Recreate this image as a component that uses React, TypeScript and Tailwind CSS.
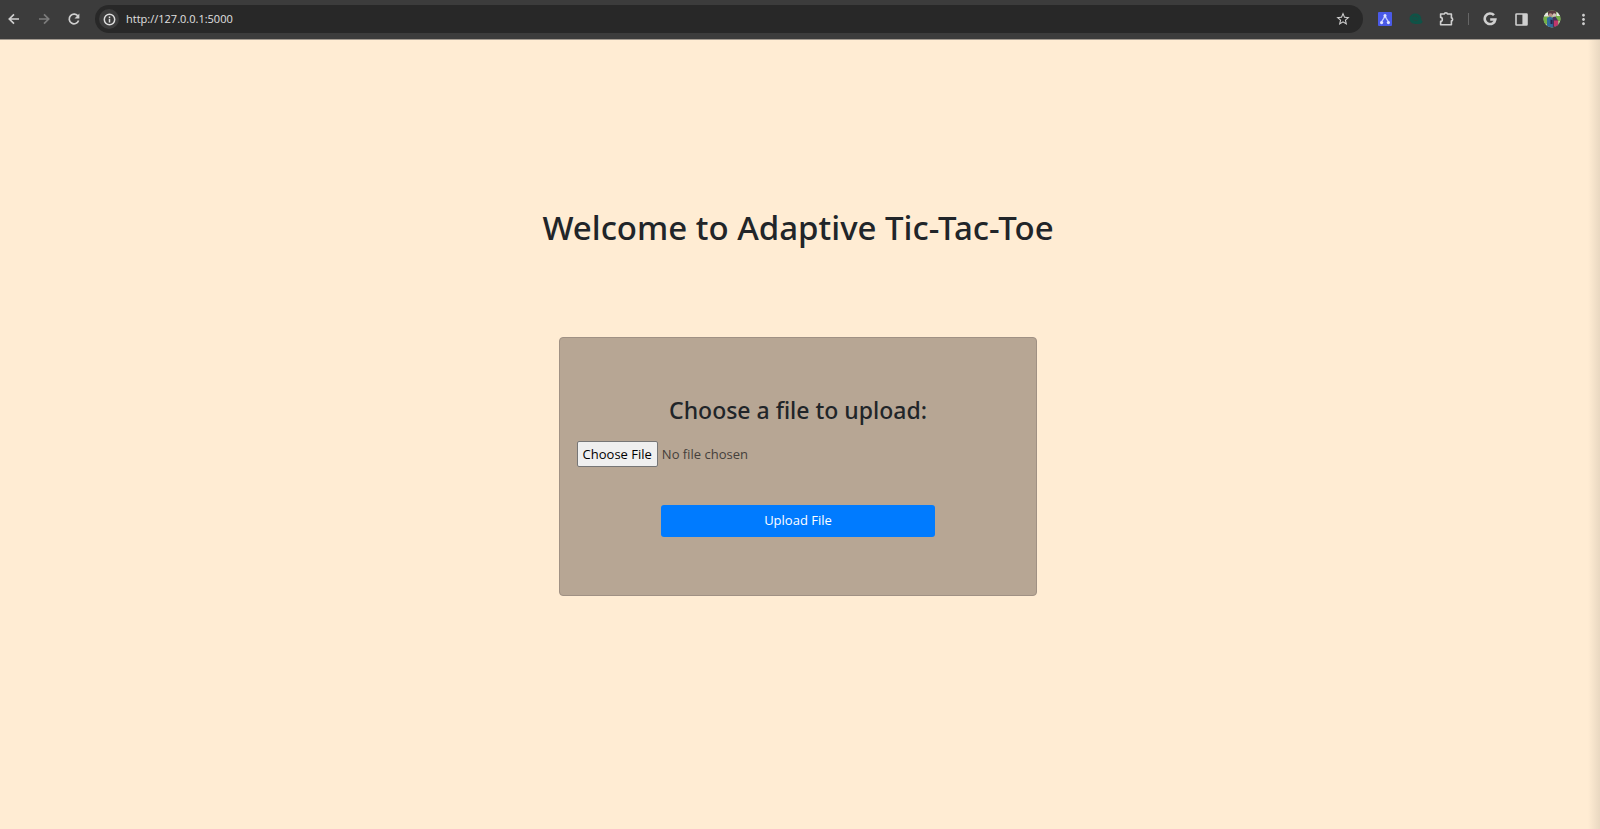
import type { ReactNode } from "react";
import { MdMoreVert, MdStarBorder } from "react-icons/md";

function ToolbarButton({ label, dim, children }: { label: string; dim?: boolean; children: ReactNode }) {
  return (
    <button
      type="button"
      aria-label={label}
      className={`flex size-5 shrink-0 items-center justify-center ${dim ? "text-[#7c7c7c]" : "text-[#cfcfcf]"}`}
    >
      {children}
    </button>
  );
}

function ArrowIcon({ forward }: { forward?: boolean }) {
  return (
    <svg width="12" height="12" viewBox="0 0 12 12" fill="none" stroke="currentColor" strokeWidth="1.7">
      <path d={forward ? "M1 6h9.4M6 1.3L10.7 6 6 10.7" : "M11 6H1.6M6 1.3L1.3 6 6 10.7"} />
    </svg>
  );
}

function ReloadIcon() {
  return (
    <svg width="14" height="14" viewBox="0 0 14 14">
      <path d="M11.1 4.4A4.8 4.8 0 1 0 11.6 8.5" fill="none" stroke="currentColor" strokeWidth="1.7" />
      <path d="M12.4 1.4v5H7.5z" fill="currentColor" />
    </svg>
  );
}

function InfoIcon() {
  return (
    <svg width="13" height="13" viewBox="0 0 13 13" fill="none" stroke="currentColor" strokeWidth="1.5">
      <circle cx="6.5" cy="6.5" r="5.2" />
      <path d="M6.5 5.8v3.6M6.5 3.4v1.5" />
    </svg>
  );
}

function NetworkIcon() {
  return (
    <svg width="14" height="14" viewBox="0 0 14 14">
      <rect width="14" height="14" rx="1" fill="#4a5ae8" />
      <path d="M7 3.5L5.6 6.6 3.4 10M7 3.5l1.4 3.1L10.6 10" stroke="#c9d0fb" strokeWidth="1.3" fill="none" />
      <circle cx="7" cy="3.4" r="1.5" fill="#dfe4ff" />
      <circle cx="3.6" cy="10.6" r="1.6" fill="#dfe4ff" />
      <circle cx="10.4" cy="10.6" r="1.6" fill="#dfe4ff" />
    </svg>
  );
}

function GreenIcon() {
  return (
    <svg width="14" height="14" viewBox="0 0 14 14">
      <path d="M.6 6.8C.6 3.6 3.2 1.6 6.4 1.6S12 3.6 12.2 6.6c.1 1.4.5 2.4 1.5 3.2-.8 1.6-2.2 2.2-4 2.2H6.4C3.2 12 .6 10 .6 6.8z" fill="#0f5347" />
      <path d="M3.4 4.8c1.8-1.2 4.4-.8 5.8 1M3.6 7c1.4 1.8 3.6 2.2 5.4 1.2" stroke="#27463f" strokeWidth="1" fill="none" />
    </svg>
  );
}

function PuzzleIcon() {
  return (
    <svg width="16" height="16" viewBox="0 0 16 16" fill="none" stroke="#cfcfcf" strokeWidth="1.6" strokeLinejoin="round">
      <path d="M1.6 3h3.8a1.5 1.2 0 0 1 3 0H12.4v3.9a1.2 1.5 0 0 1 0 3V13.8H1.6v-3.4a1.7 2 0 0 0 0-4z" />
    </svg>
  );
}

function GoogleIcon() {
  return (
    <svg width="14" height="14" viewBox="0 0 14 14" fill="none" stroke="#cfcfcf" strokeWidth="2.6">
      <path d="M11 3.2A5.3 5.3 0 1 0 12.3 7.5H7.2" />
    </svg>
  );
}

function SidePanelIcon() {
  return (
    <svg width="13" height="13" viewBox="0 0 13 13">
      <rect x="1" y="1" width="11" height="11" rx="0.5" fill="none" stroke="#cfcfcf" strokeWidth="1.6" />
      <path d="M7.4 1H12v11H7.4z" fill="#cfcfcf" />
    </svg>
  );
}

function Avatar() {
  return (
    <svg width="18" height="18" viewBox="0 0 18 18">
      <clipPath id="avatar-clip">
        <circle cx="9" cy="9" r="8.5" />
      </clipPath>
      <g clipPath="url(#avatar-clip)">
        <path d="M0 0h18v18H0z" fill="#a9c98c" />
        <path d="M0 7h6v7H0zM13 6h5v5h-5z" fill="#74b048" />
        <path d="M1 3h4v3H1zM14 2h3v4h-3z" fill="#e6e5e3" />
        <path d="M5 0h8v5H5z" fill="#5a3c40" />
        <circle cx="7.4" cy="5.2" r="2" fill="#b98f82" />
        <circle cx="11.3" cy="5" r="1.8" fill="#d5c0bb" />
        <path d="M4 8l3-1.5 3 1.5v10H4z" fill="#2f6b9c" />
        <path d="M9.5 7.2l3-.6 2.5 4V18h-5z" fill="#493459" />
        <path d="M11 10.5h4.2v6H11z" fill="#c0376b" />
        <path d="M7.5 9.5l2 .5v4h-2z" fill="#26234a" />
      </g>
    </svg>
  );
}

function BrowserBar() {
  return (
    <header className="flex h-10 shrink-0 items-center border-b border-[#a39a90] bg-[#3c3c3c] pr-[7px] pb-px pl-1">
      <nav aria-label="Navigation" className="flex items-center gap-2.5">
        <ToolbarButton label="Back"><ArrowIcon /></ToolbarButton>
        <ToolbarButton label="Forward" dim><ArrowIcon forward /></ToolbarButton>
        <ToolbarButton label="Reload"><ReloadIcon /></ToolbarButton>
      </nav>
      <div className="ml-[11px] flex h-7 grow items-center rounded-full bg-[#282828] pr-2.5 pl-1">
        <button type="button" aria-label="Site information" className="flex size-5 items-center justify-center rounded-full bg-[#3c3c3c] text-[#dcdcdc]">
          <InfoIcon />
        </button>
        <input
          aria-label="Address"
          defaultValue="http://127.0.0.1:5000"
          className="ml-[7px] min-w-0 grow bg-transparent font-['Open_Sans',sans-serif] text-[11px] text-[#e0e0e0] outline-none"
        />
        <ToolbarButton label="Bookmark"><MdStarBorder size={16} /></ToolbarButton>
      </div>
      <div className="ml-3 flex items-center gap-[11px]">
        <ToolbarButton label="Network extension"><NetworkIcon /></ToolbarButton>
        <ToolbarButton label="Green extension"><GreenIcon /></ToolbarButton>
        <ToolbarButton label="Extensions"><PuzzleIcon /></ToolbarButton>
      </div>
      <div className="mx-[11px] h-3 w-px bg-[#666666]" />
      <div className="flex items-center gap-[11px]">
        <ToolbarButton label="Google"><GoogleIcon /></ToolbarButton>
        <ToolbarButton label="Side panel"><SidePanelIcon /></ToolbarButton>
        <ToolbarButton label="Profile"><Avatar /></ToolbarButton>
        <ToolbarButton label="Menu"><MdMoreVert size={17} /></ToolbarButton>
      </div>
    </header>
  );
}

export default function App() {
  return (
    <div className="flex min-h-screen flex-col bg-[#ffecd3] font-['Open_Sans',sans-serif] text-[#212529]">
      <BrowserBar />
      <main className="relative flex grow flex-col items-center pt-40 pr-1">
        <h1 className="font-['Noto_Sans','Open_Sans',sans-serif] text-[33px] leading-14 font-medium">Welcome to Adaptive Tic-Tac-Toe</h1>
        <form
          onSubmit={(event) => event.preventDefault()}
          className="mt-[81px] flex w-[30%] min-w-80 flex-col items-center rounded border border-[#a09184] bg-[#b7a694] px-[17px] pt-[54px] pb-[58px]"
        >
          <label htmlFor="upload" className="font-['Noto_Sans','Open_Sans',sans-serif] text-[23px] leading-9 font-medium">Choose a file to upload:</label>
          <input
            id="upload"
            type="file"
            className="mt-[13px] w-full text-[13px] leading-5 text-[#45403b] file:mr-1 file:h-[26px] file:rounded-xs file:border file:border-solid file:border-[#767676] file:bg-[#efefef] file:px-[5px] file:text-black"
          />
          <button type="submit" className="mt-[38px] h-8 w-[62%] rounded-[3px] bg-[#007bff] text-[13px] text-white">
            Upload File
          </button>
        </form>
        <div className="pointer-events-none absolute inset-y-0 right-0 w-3 bg-linear-to-r from-transparent to-[#e9d8c1]" />
      </main>
    </div>
  );
}
